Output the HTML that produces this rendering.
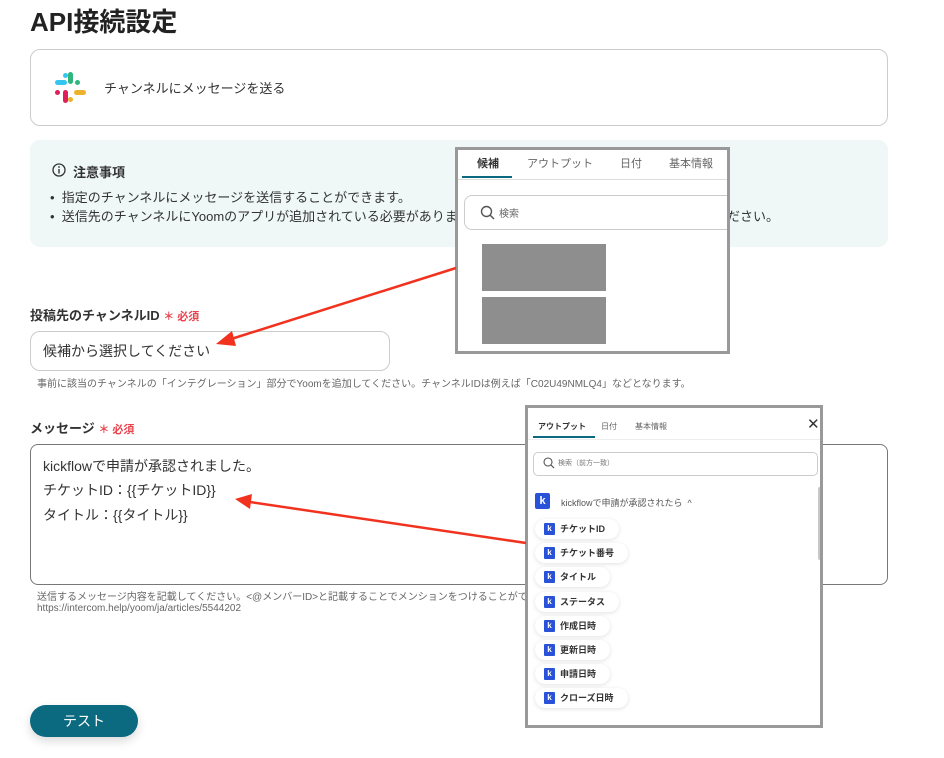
<!DOCTYPE html>
<html><head><meta charset="utf-8"><style>
*{box-sizing:border-box;margin:0;padding:0}
body{width:944px;height:758px;background:#fff;position:relative;overflow:hidden;font-family:"Liberation Sans","Noto Sans CJK JP",sans-serif;color:#333}
.a{position:absolute;white-space:nowrap}
.req{color:#e8434f;font-size:11px;font-weight:bold}
.chip{position:absolute;left:535px;height:20px;border-radius:10px;background:#fff;box-shadow:0 1px 4px rgba(0,0,0,.12);font-size:9px;font-weight:bold;color:#333;line-height:20px;padding-left:25px;padding-right:14px}
.chip:before{content:"k";position:absolute;left:9px;top:4px;width:11px;height:12px;background:#2a52d8;color:#fff;font-size:8px;line-height:12px;text-align:center;border-radius:1px}
</style></head><body>
<div class="a" style="left:30px;top:2px;font-size:26px;font-weight:bold;color:#222">API接続設定</div>
<div class="a" style="left:30px;top:49px;width:858px;height:77px;border:1px solid #ccc;border-radius:10px"></div>
<svg class="a" style="left:55px;top:72px" width="31" height="31" viewBox="0 0 31 31">
<rect x="13" y="0" width="5" height="12" rx="2.5" fill="#2eb67d"/><rect x="20" y="8" width="5" height="5" rx="2.5" fill="#2eb67d"/>
<rect x="0" y="8" width="12" height="5" rx="2.5" fill="#36c5f0"/><rect x="8" y="1" width="5" height="5" rx="2.5" fill="#36c5f0"/>
<rect x="19" y="18" width="12" height="5" rx="2.5" fill="#ecb22e"/><rect x="13" y="25" width="5" height="5" rx="2.5" fill="#ecb22e"/>
<rect x="8" y="18" width="5" height="13" rx="2.5" fill="#e01e5a"/><rect x="0" y="18" width="5" height="5" rx="2.5" fill="#e01e5a"/>
</svg>
<div class="a" style="left:104px;top:78px;font-size:13px">チャンネルにメッセージを送る</div>
<div class="a" style="left:30px;top:140px;width:858px;height:107px;background:#eff8f7;border-radius:10px"></div>
<svg class="a" style="left:52px;top:163px" width="14" height="14"><circle cx="7" cy="7" r="6" fill="none" stroke="#333" stroke-width="1.3"/><rect x="6.3" y="6" width="1.4" height="4.5" fill="#333"/><circle cx="7" cy="4" r=".9" fill="#333"/></svg>
<div class="a" style="left:73px;top:162px;font-size:13px;font-weight:bold">注意事項</div>
<div class="a" style="left:50px;top:187px;font-size:13px">•&nbsp; 指定のチャンネルにメッセージを送信することができます。</div>
<div class="a" style="left:50px;top:206px;font-size:13px">•&nbsp; 送信先のチャンネルにYoomのアプリが追加されている必要がありま</div>
<div class="a" style="left:727px;top:206px;font-size:13px">ださい。</div>

<div class="a" style="left:30px;top:305px;font-size:13px;font-weight:bold">投稿先のチャンネルID <span class="req">＊ 必須</span></div>
<div class="a" style="left:30px;top:331px;width:360px;height:40px;border:1px solid #ccc;border-radius:10px"></div>
<div class="a" style="left:43px;top:341px;font-size:14px">候補から選択してください</div>
<div class="a" style="left:37px;top:375px;font-size:10px;color:#666">事前に該当のチャンネルの「インテグレーション」部分でYoomを追加してください。チャンネルIDは例えば「C02U49NMLQ4」などとなります。</div>

<div class="a" style="left:30px;top:418px;font-size:13px;font-weight:bold">メッセージ <span class="req">＊ 必須</span></div>
<div class="a" style="left:30px;top:444px;width:858px;height:141px;border:1px solid #777;border-radius:8px"></div>
<div class="a" style="left:43px;top:456px;font-size:14px">kickflowで申請が承認されました。</div>
<div class="a" style="left:43px;top:480px;font-size:14px">チケットID：{{チケットID}}</div>
<div class="a" style="left:43px;top:505px;font-size:14px">タイトル：{{タイトル}}</div>
<div class="a" style="left:37px;top:588px;font-size:10px;color:#666">送信するメッセージ内容を記載してください。&lt;@メンバーID&gt;と記載することでメンションをつけることがで</div>
<div class="a" style="left:37px;top:603px;font-size:10px;color:#666">https://intercom.help/yoom/ja/articles/5544202</div>

<div class="a" style="left:30px;top:705px;width:108px;height:32px;background:#0b6a80;border-radius:16px;color:#fff;font-size:14px;text-align:center;line-height:32px;box-shadow:0 4px 10px rgba(0,0,0,.15)">テスト</div>

<!-- popup 1 -->
<div class="a" style="left:455px;top:147px;width:275px;height:207px;border:3px solid #999;background:#fff;overflow:hidden">
 <div class="a" style="left:19px;top:5px;font-size:11px;font-weight:bold;color:#333">候補</div>
 <div class="a" style="left:69px;top:5px;font-size:11px;color:#666">アウトプット</div>
 <div class="a" style="left:162px;top:5px;font-size:11px;color:#666">日付</div>
 <div class="a" style="left:211px;top:5px;font-size:11px;color:#666">基本情報</div>
 <div class="a" style="left:4px;top:26px;width:50px;height:2px;background:#0b6a80"></div>
 <div class="a" style="left:0;top:29px;width:275px;height:1px;background:#ddd"></div>
 <div class="a" style="left:6px;top:45px;width:280px;height:35px;border:1px solid #ccc;border-radius:8px"></div>
 <svg class="a" style="left:22px;top:55px" width="16" height="16"><circle cx="6.5" cy="6.5" r="5" fill="none" stroke="#555" stroke-width="1.4"/><line x1="10" y1="10" x2="14" y2="14" stroke="#555" stroke-width="1.5"/></svg>
 <div class="a" style="left:41px;top:55px;font-size:10px;color:#666">検索</div>
 <div class="a" style="left:24px;top:94px;width:124px;height:47px;background:#8e8e8e"></div>
 <div class="a" style="left:24px;top:147px;width:124px;height:47px;background:#8e8e8e"></div>
</div>

<!-- popup 2 -->
<div class="a" style="left:525px;top:405px;width:298px;height:323px;border:3px solid #999;background:#fff;overflow:hidden">
 <div class="a" style="left:10px;top:13px;font-size:8px;font-weight:bold;color:#333">アウトプット</div>
 <div class="a" style="left:73px;top:13px;font-size:8px;color:#666">日付</div>
 <div class="a" style="left:107px;top:13px;font-size:8px;color:#666">基本情報</div>
 <div class="a" style="left:279px;top:7px;font-size:15px;color:#333">✕</div>
 <div class="a" style="left:5px;top:28px;width:62px;height:2px;background:#0b6a80"></div>
 <div class="a" style="left:0;top:31px;width:298px;height:1px;background:#eee"></div>
 <div class="a" style="left:5px;top:44px;width:285px;height:24px;border:1px solid #ccc;border-radius:5px"></div>
 <svg class="a" style="left:15px;top:49px" width="12" height="12"><circle cx="5" cy="5" r="4" fill="none" stroke="#555" stroke-width="1.1"/><line x1="8" y1="8" x2="11" y2="11" stroke="#555" stroke-width="1.2"/></svg>
 <div class="a" style="left:30px;top:50px;font-size:7px;color:#777">検索（前方一致）</div>
 <div class="a" style="left:7px;top:85px;width:15px;height:16px;background:#2a52d8;border-radius:2px;color:#fff;font-size:11px;font-weight:bold;text-align:center;line-height:16px">k</div>
 <div class="a" style="left:33px;top:88px;font-size:9px;color:#555">kickflowで申請が承認されたら &nbsp;^</div>
 <div class="a" style="left:290px;top:79px;width:5px;height:73px;background:#c8c8c8;border-radius:2px"></div>
</div>
<div class="chip" style="top:519px">チケットID</div>
<div class="chip" style="top:543px">チケット番号</div>
<div class="chip" style="top:567px">タイトル</div>
<div class="chip" style="top:592px">ステータス</div>
<div class="chip" style="top:616px">作成日時</div>
<div class="chip" style="top:640px">更新日時</div>
<div class="chip" style="top:664px">申請日時</div>
<div class="chip" style="top:688px">クローズ日時</div>

<svg class="a" style="left:0;top:0" width="944" height="758">
<defs><marker id="m" markerWidth="8" markerHeight="8" refX="1" refY="4" orient="auto" markerUnits="userSpaceOnUse"><path d="M0,0 L0,0"/></marker></defs>
<line x1="456" y1="268" x2="228" y2="340" stroke="#f0321e" stroke-width="2.5"/>
<path d="M216,344 L232,331 L236,346 Z" fill="#f0321e"/>
<line x1="526" y1="543" x2="250" y2="502" stroke="#f0321e" stroke-width="2.5"/>
<path d="M235,499 L252,494 L250,509 Z" fill="#f0321e"/>
</svg>
</body></html>
